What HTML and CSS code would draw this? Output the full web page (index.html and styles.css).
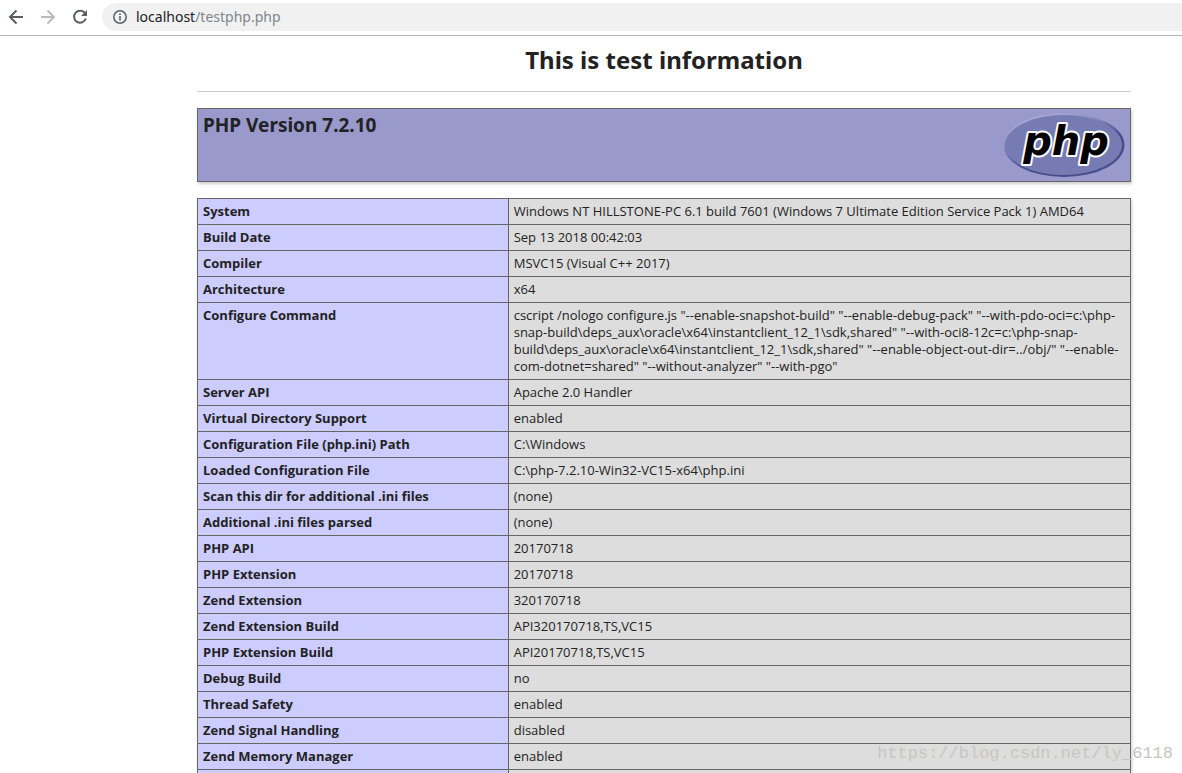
FILE: index.html
```html
<!DOCTYPE html>
<html lang="en">
<head>
<meta charset="utf-8">
<title>phpinfo()</title>
<link rel="stylesheet" href="styles.css">
</head>
<body>
<header class="toolbar">
  <button class="nav" type="button" aria-label="Back"><svg viewBox="0 0 16 16"><path d="M15 8H2M8.500 1.500L2 8l6.500 6.500"/></svg></button>
  <button class="nav nav-off" type="button" aria-label="Forward" disabled><svg viewBox="0 0 16 16"><path d="M1 8h13M7.500 1.500L14 8l-6.500 6.500"/></svg></button>
  <button class="nav" type="button" aria-label="Reload"><svg viewBox="0 0 16 16"><path d="M13 4.200A6 6 0 1 0 13.800 9.500"/><path class="solid" d="M15 1v6H9z"/></svg></button>
  <div class="address">
    <svg class="info" viewBox="0 0 16 16"><circle cx="8" cy="8" r="6.200"/><path d="M8 7v4.500M8 4.300v1.800"/></svg>
    <span class="url"><span class="host">localhost</span>/testphp.php</span>
  </div>
</header>
<main class="page">
  <h1 class="title">This is test information</h1>
  <hr class="rule">
  <section class="banner">
    <h2 class="version">PHP Version 7.2.10</h2>
    <svg class="logo" viewBox="0 0 122 66" role="img" aria-label="PHP logo">
      <defs>
        <linearGradient id="rim" x1="0.2" y1="0" x2="0.75" y2="0.9">
          <stop offset="0" stop-color="#b0b2da"/>
          <stop offset="0.3" stop-color="#9092c4"/>
          <stop offset="0.65" stop-color="#484d8c"/>
          <stop offset="1" stop-color="#484d8c"/>
        </linearGradient>
      </defs>
      <ellipse cx="61" cy="33" rx="60.500" ry="32" fill="url(#rim)"/>
      <ellipse cx="60.500" cy="33" rx="58.500" ry="30" fill="#777bb3"/>
      <text class="wordmark" x="63" y="43" text-anchor="middle">php</text>
    </svg>
  </section>
  <table class="info-table">
    <tbody>
      <tr><th scope="row">System</th><td>Windows NT HILLSTONE-PC 6.1 build 7601 (Windows 7 Ultimate Edition Service Pack 1) AMD64</td></tr>
      <tr><th scope="row">Build Date</th><td>Sep 13 2018 00:42:03</td></tr>
      <tr><th scope="row">Compiler</th><td>MSVC15 (Visual C++ 2017)</td></tr>
      <tr><th scope="row">Architecture</th><td>x64</td></tr>
      <tr><th scope="row">Configure Command</th><td>cscript /nologo configure.js "--enable-snapshot-build" "--enable-debug-pack" "--with-pdo-oci=c:\php-<br>snap-build\deps_aux\oracle\x64\instantclient_12_1\sdk,shared" "--with-oci8-12c=c:\php-snap-<br>build\deps_aux\oracle\x64\instantclient_12_1\sdk,shared" "--enable-object-out-dir=../obj/" "--enable-<br>com-dotnet=shared" "--without-analyzer" "--with-pgo"</td></tr>
      <tr><th scope="row">Server API</th><td>Apache 2.0 Handler</td></tr>
      <tr><th scope="row">Virtual Directory Support</th><td>enabled</td></tr>
      <tr><th scope="row">Configuration File (php.ini) Path</th><td>C:\Windows</td></tr>
      <tr><th scope="row">Loaded Configuration File</th><td>C:\php-7.2.10-Win32-VC15-x64\php.ini</td></tr>
      <tr><th scope="row">Scan this dir for additional .ini files</th><td>(none)</td></tr>
      <tr><th scope="row">Additional .ini files parsed</th><td>(none)</td></tr>
      <tr><th scope="row">PHP API</th><td>20170718</td></tr>
      <tr><th scope="row">PHP Extension</th><td>20170718</td></tr>
      <tr><th scope="row">Zend Extension</th><td>320170718</td></tr>
      <tr><th scope="row">Zend Extension Build</th><td>API320170718,TS,VC15</td></tr>
      <tr><th scope="row">PHP Extension Build</th><td>API20170718,TS,VC15</td></tr>
      <tr><th scope="row">Debug Build</th><td>no</td></tr>
      <tr><th scope="row">Thread Safety</th><td>enabled</td></tr>
      <tr><th scope="row">Zend Signal Handling</th><td>disabled</td></tr>
      <tr><th scope="row">Zend Memory Manager</th><td>enabled</td></tr>
      <tr class="spacer"><th></th><td></td></tr>
    </tbody>
  </table>
</main>
<div class="watermark">https://blog.csdn.net/ly_6118</div>
</body>
</html>
```
FILE: styles.css
```css
* { box-sizing: border-box; }

body {
  display: flex;
  flex-direction: column;
  height: 100vh;
  margin: 0;
  overflow: hidden;
  background: #fff;
  color: #222;
  font-family: "Noto Sans", "Open Sans", sans-serif;
}

.toolbar {
  display: flex;
  align-items: center;
  flex: none;
  gap: 16px;
  padding: 3px 0 4px 8px;
  border-bottom: 1px solid #b4b4b4;
}

.nav {
  width: 16px;
  height: 16px;
  padding: 0;
  border: 0;
  background: none;
  color: #5a5d61;
}
.nav-off { color: #b9bbbd; }
.nav svg, .info {
  display: block;
  width: 16px;
  height: 16px;
  fill: none;
  stroke: currentColor;
  stroke-width: 2;
}
.nav .solid { fill: currentColor; stroke: none; }

.address {
  display: flex;
  align-items: center;
  flex: 1;
  gap: 8px;
  height: 28px;
  margin-left: -2px;
  padding-left: 10px;
  border-radius: 14px 0 0 14px;
  background: #f1f1f1;
}
.info { color: #5f6368; stroke-width: 1.6; }
.url { color: #80868b; font-size: 14px; line-height: 20px; }
.host { color: #202124; }

.page {
  flex: 1;
  min-height: 0;
  overflow: hidden;
  padding: 6px 51px 0 197px;
}

.title {
  margin: 0;
  font-size: 24px;
  line-height: 36px;
  text-align: center;
}

.rule {
  height: 1px;
  margin: 13px 0 16px;
  border: 0;
  background: #ccc;
}

.banner {
  display: flex;
  justify-content: space-between;
  align-items: flex-start;
  margin-bottom: 16px;
  padding: 3px 5px;
  border: 1px solid #666;
  background: #99c;
  box-shadow: 1px 2px 3px #ccc;
}
.version { margin: 0; font-size: 19px; line-height: 26px; }
.logo { width: 122px; height: 66px; }
.wordmark {
  font: italic 700 40px "DejaVu Sans", sans-serif;
  fill: #000;
  stroke: #fff;
  stroke-width: 4px;
  stroke-linejoin: round;
  paint-order: stroke;
}

.info-table {
  width: 100%;
  border-collapse: collapse;
  table-layout: fixed;
  box-shadow: 1px 2px 3px #ccc;
  font-family: "Open Sans", "Noto Sans", sans-serif;
  font-size: 13px;
  line-height: 17px;
}
.info-table th, .info-table td {
  padding: 4px 5px;
  border: 1px solid #666;
  text-align: left;
  vertical-align: top;
}
.info-table th { width: 33.3%; background: #ccf; }
.info-table td { background: #ddd; white-space: nowrap; }
.spacer { height: 26px; }

.watermark {
  position: absolute;
  right: 9px;
  bottom: 7px;
  color: #c6c6c0;
  font-family: "Liberation Mono", monospace;
  font-size: 17px;
  line-height: 24px;
}
```
